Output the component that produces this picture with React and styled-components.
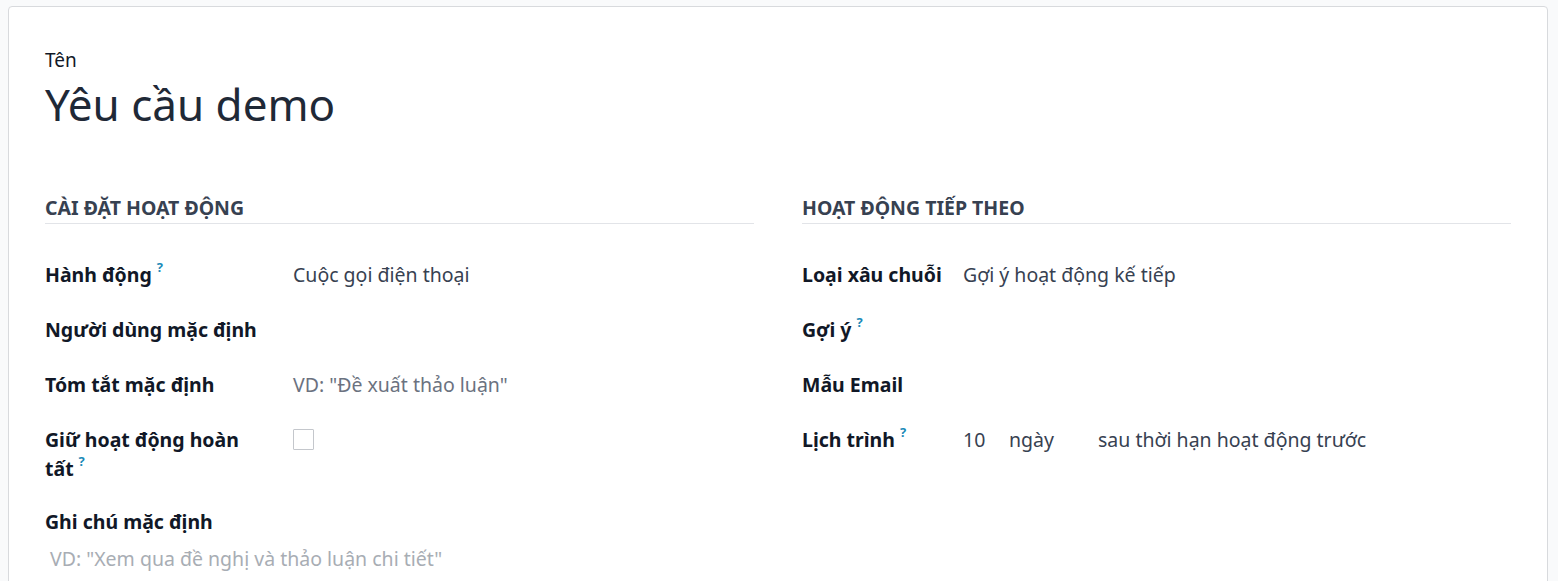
import styled, { createGlobalStyle } from "styled-components";

const GlobalStyle = createGlobalStyle`
  body {
    margin: 0;
    background-color: #f9fafb;
    font-family: "Noto Sans", "Open Sans", sans-serif;
    color: #374151;
  }
`;

const Sheet = styled.div`
  margin: 6px 10px 0 8px;
  min-height: 600px;
  background-color: #ffffff;
  border: 1px solid #d8dadd;
  border-radius: 4px 4px 0 0;
  padding: 40px 36px 0 36px;
`;

const TitleLabel = styled.div`
  font-size: 19px;
  line-height: 26px;
  color: #111827;
`;

const Title = styled.h1`
  margin: 0;
  font-size: 44px;
  font-weight: 400;
  line-height: 62px;
  color: #1f2937;
`;

const Columns = styled.div`
  display: grid;
  grid-template-columns: 1fr 1fr;
  column-gap: 48px;
  margin-top: 59px;
`;

const Section = styled.div`
  display: flex;
  flex-direction: column;
`;

const SectionTitle = styled.h2`
  margin: 0 0 23px 0;
  padding-bottom: 1px;
  font-size: 19.5px;
  font-weight: 700;
  line-height: 28px;
  text-transform: uppercase;
  color: #374151;
  border-bottom: 1px solid #e2e4e8;
`;

const Row = styled.div`
  display: grid;
  grid-template-columns: ${(p) => p.$labelWidth}px 1fr;
  padding: 13px 0;
  align-items: start;
`;

const Label = styled.div`
  padding-right: 16px;
  font-size: 19.5px;
  font-weight: 700;
  line-height: 29px;
  color: #111827;
`;

const Help = styled.sup`
  margin-left: 5px;
  font-size: 13px;
  font-weight: 700;
  line-height: 1;
  color: #1b8ab8;
  vertical-align: top;
  position: relative;
  top: 1px;
`;

const Value = styled.div`
  min-height: 29px;
  font-size: 19.5px;
  line-height: 29px;
  color: ${(p) => (p.$placeholder ? "#6b7280" : "#374151")};
  display: flex;
  align-items: flex-start;
`;

const Checkbox = styled.span`
  display: inline-block;
  width: 19px;
  height: 19px;
  margin-top: 4px;
  border: 1px solid #c4c7cc;
  border-radius: 1px;
  background-color: #ffffff;
`;

const Part = styled.span`
  display: inline-block;
  width: ${(p) => p.$w}px;
`;

const NoteLabel = styled(Label)`
  padding-top: 11px;
`;

const NotePlaceholder = styled.div`
  padding: 8px 0 0 5px;
  font-size: 19.5px;
  line-height: 29px;
  color: #a8adb4;
`;

export default function App() {
  return (
    <>
      <GlobalStyle />
      <Sheet>
        <TitleLabel>Tên</TitleLabel>
        <Title>Yêu cầu demo</Title>
        <Columns>
          <Section>
            <SectionTitle>Cài đặt hoạt động</SectionTitle>
            <Row $labelWidth={248}>
              <Label>
                Hành động<Help>?</Help>
              </Label>
              <Value>Cuộc gọi điện thoại</Value>
            </Row>
            <Row $labelWidth={248}>
              <Label>Người dùng mặc định</Label>
              <Value />
            </Row>
            <Row $labelWidth={248}>
              <Label>Tóm tắt mặc định</Label>
              <Value $placeholder>VD: "Đề xuất thảo luận"</Value>
            </Row>
            <Row $labelWidth={248}>
              <Label>
                Giữ hoạt động hoàn tất<Help>?</Help>
              </Label>
              <Value>
                <Checkbox />
              </Value>
            </Row>
            <NoteLabel>Ghi chú mặc định</NoteLabel>
            <NotePlaceholder>VD: "Xem qua đề nghị và thảo luận chi tiết"</NotePlaceholder>
          </Section>
          <Section>
            <SectionTitle>Hoạt động tiếp theo</SectionTitle>
            <Row $labelWidth={161}>
              <Label>Loại xâu chuỗi</Label>
              <Value>Gợi ý hoạt động kế tiếp</Value>
            </Row>
            <Row $labelWidth={161}>
              <Label>
                Gợi ý<Help>?</Help>
              </Label>
              <Value />
            </Row>
            <Row $labelWidth={161}>
              <Label>Mẫu Email</Label>
              <Value />
            </Row>
            <Row $labelWidth={161}>
              <Label>
                Lịch trình<Help>?</Help>
              </Label>
              <Value>
                <Part $w={46}>10</Part>
                <Part $w={89}>ngày</Part>
                <span>sau thời hạn hoạt động trước</span>
              </Value>
            </Row>
          </Section>
        </Columns>
      </Sheet>
    </>
  );
}
